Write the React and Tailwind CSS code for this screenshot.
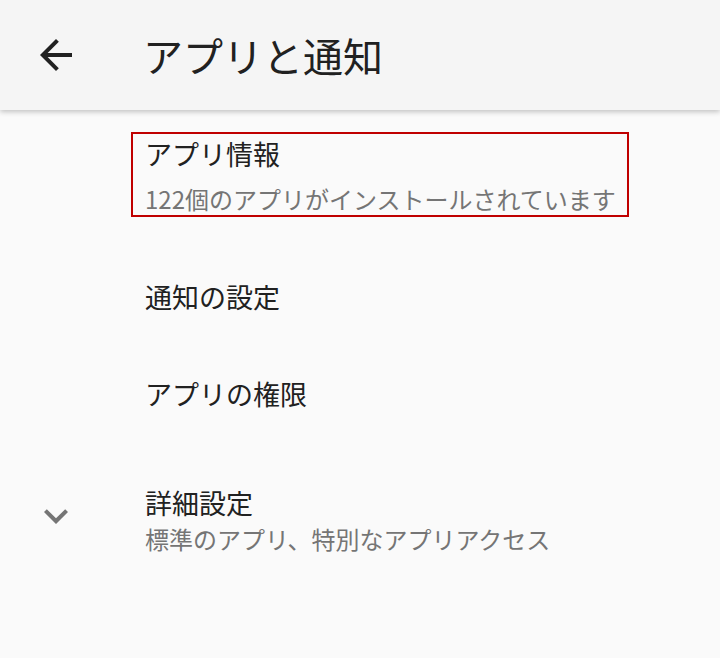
import React from "react";

const font = { fontFamily: '"Noto Sans CJK JP", "Noto Sans", sans-serif' };

function BackArrow() {
  return (
    <svg viewBox="0 0 24 24" className="w-12 h-12 fill-[#212121]">
      <path d="M20 11H7.83l5.59-5.59L12 4l-8 8 8 8 1.41-1.41L7.83 13H20v-2z" />
    </svg>
  );
}

function ExpandMore() {
  return (
    <svg viewBox="0 0 24 24" className="w-12 h-12 fill-[#757575]">
      <path d="M16.59 8.59L12 13.17 7.41 8.59 6 10l6 6 6-6z" />
    </svg>
  );
}

export default function App() {
  return (
    <div className="w-[720px] h-[658px] bg-[#fafafa] overflow-hidden" style={font}>
      {/* toolbar */}
      <div className="relative z-10 h-[110px] bg-[#f5f5f5] flex items-center pl-8 shadow-[0_2px_5px_rgba(0,0,0,0.22)]">
        <BackArrow />
        <span className="ml-[63px] text-[40px] leading-[48px] text-[#212121]">
          アプリと通知
        </span>
      </div>

      {/* アプリ情報 (highlighted) */}
      <div className="pt-[22px] pl-[131px]">
        <div className="inline-flex flex-col border-2 border-[#c00000] pl-3 pr-[11px] pt-[1px] h-[85px]">
          <span className="text-[27px] leading-[38px] text-[#212121]">アプリ情報</span>
          <span className="mt-[12px] text-[24px] leading-[28px] text-[#757575]">
            122個のアプリがインストールされています
          </span>
        </div>
      </div>

      <div className="mt-[31px] h-[97px] flex items-center pl-[145px]">
        <span className="text-[27px] leading-[38px] text-[#212121]">通知の設定</span>
      </div>

      <div className="h-[97px] flex items-center pl-[145px]">
        <span className="text-[27px] leading-[38px] text-[#212121]">アプリの権限</span>
      </div>

      <div className="h-[148px] flex items-center pl-8">
        <ExpandMore />
        <div className="ml-[65px] mt-[4px] flex flex-col">
          <span className="text-[27px] leading-[38px] text-[#212121]">詳細設定</span>
          <span className="mt-[3px] text-[24px] leading-[28px] text-[#757575]">
            標準のアプリ、特別なアプリアクセス
          </span>
        </div>
      </div>
    </div>
  );
}
